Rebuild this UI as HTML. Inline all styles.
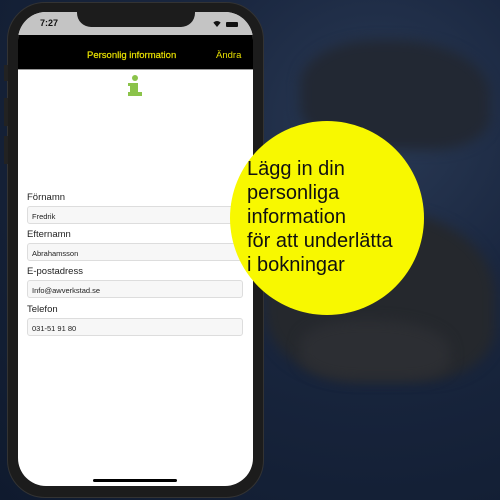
<!DOCTYPE html>
<html><head><style>
*{margin:0;padding:0;box-sizing:border-box}
body{width:500px;height:500px;overflow:hidden;position:relative;font-family:"Liberation Sans",sans-serif;
background:radial-gradient(ellipse at 75% 25%,#2a3a55 0%,#1a2740 35%,#142036 70%,#0f1a2e 100%)}
.rock{position:absolute;background:#2b2e33;border-radius:40% 50% 30% 40%;filter:blur(6px)}
.phone{position:absolute;left:7px;top:2px;width:257px;height:496px;background:#1c1c1c;border-radius:38px;border:1px solid #333}
.screen{position:absolute;left:18px;top:12px;width:235px;height:474px;background:#fff;border-radius:28px;overflow:hidden}
.status{position:absolute;left:0;top:0;width:235px;height:23px;background:#c4c4c4}
.notch{position:absolute;left:59px;top:-2px;width:118px;height:17px;background:#1c1c1c;border-radius:0 0 14px 14px}
.nav{position:absolute;left:0;top:23px;width:235px;height:35px;background:#000;border-bottom:1px solid #999}
.lab{position:absolute;left:9px;font-size:9.5px;color:#222}
.inp{position:absolute;left:9px;width:216px;height:18px;background:#f7f7f7;border:1px solid #ddd;border-radius:3px;font-size:7.5px;color:#222;padding:5px 0 0 4px}
.circle{position:absolute;left:230px;top:121px;width:194px;height:194px;border-radius:50%;background:#f8f800}
.ctext{position:absolute;left:247px;top:157px;font-size:20px;line-height:24px;color:#111}
</style></head><body>
<div class="rock" style="left:300px;top:40px;width:190px;height:110px;background:#222833"></div>
<div class="rock" style="left:265px;top:210px;width:230px;height:170px;background:#25282d"></div>
<div class="rock" style="left:300px;top:320px;width:150px;height:60px;background:#2c2e33"></div>
<div class="phone"></div>
<div style="position:absolute;left:4px;top:65px;width:4px;height:16px;background:#222"></div>
<div style="position:absolute;left:4px;top:98px;width:4px;height:28px;background:#222"></div>
<div style="position:absolute;left:4px;top:136px;width:4px;height:28px;background:#222"></div>
<div class="screen">
 <div class="status"></div>
 <div class="notch"></div>
 <div style="position:absolute;left:22px;top:6px;font-size:9px;font-weight:bold;color:#111">7:27</div>
 <div style="position:absolute;left:194px;top:9px;width:10px;height:6px;border-radius:6px 6px 0 0;background:#111;clip-path:polygon(0 0,100% 0,50% 100%)"></div>
 <div style="position:absolute;left:208px;top:10px;width:12px;height:5px;background:#111;border-radius:1px"></div>
 <div class="nav">
  <div style="position:absolute;left:69px;top:15px;font-size:9.5px;color:#e8e000;-webkit-text-stroke:0.2px #e8e000">Personlig information</div>
  <div style="position:absolute;left:198px;top:15px;font-size:9.5px;color:#e8e000">Ändra</div>
 </div>
 <div style="position:absolute;left:114px;top:63px;width:6px;height:6px;border-radius:50%;background:#8bc34a"></div>
 <div style="position:absolute;left:112px;top:71px;width:8px;height:13px;background:#8bc34a"></div>
 <div style="position:absolute;left:110px;top:80px;width:14px;height:4px;background:#8bc34a"></div>
 <div style="position:absolute;left:110px;top:71px;width:4px;height:3px;background:#8bc34a"></div>
 <div class="lab" style="top:180px">Förnamn</div>
 <div class="inp" style="top:194px">Fredrik</div>
 <div class="lab" style="top:217px">Efternamn</div>
 <div class="inp" style="top:231px">Abrahamsson</div>
 <div class="lab" style="top:254px">E-postadress</div>
 <div class="inp" style="top:268px">Info@awverkstad.se</div>
 <div class="lab" style="top:292px">Telefon</div>
 <div class="inp" style="top:306px">031-51 91 80</div>
 <div style="position:absolute;left:75px;top:467px;width:84px;height:3px;border-radius:2px;background:#000"></div>
</div>
<div class="circle"></div>
<div class="ctext">Lägg in din<br>personliga<br>information<br>för att underlätta<br>i bokningar</div>
</body></html>
